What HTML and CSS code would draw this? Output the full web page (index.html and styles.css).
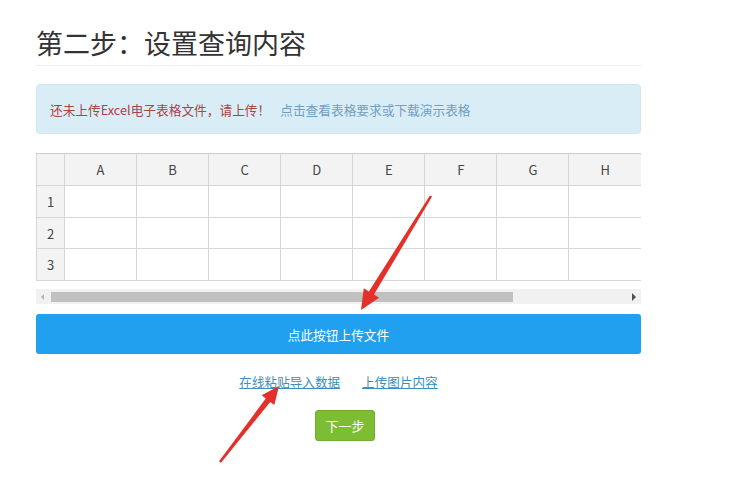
FILE: index.html
```html
<!DOCTYPE html>
<html lang="zh">
<head>
<meta charset="utf-8">
<title>第二步：设置查询内容</title>
<link rel="stylesheet" href="styles.css">
</head>
<body>
<div class="page">
  <h1 class="title">第二步：设置查询内容</h1>
  <div class="alert">
    <span class="alert-warn">还未上传Excel电子表格文件，请上传！</span>
    <a class="alert-link" href="#">点击查看表格要求或下载演示表格</a>
  </div>
  <table class="sheet">
    <thead>
      <tr><th class="corner"></th><th>A</th><th>B</th><th>C</th><th>D</th><th>E</th><th>F</th><th>G</th><th>H</th></tr>
    </thead>
    <tbody>
      <tr><th class="rh">1</th><td></td><td></td><td></td><td></td><td></td><td></td><td></td><td></td></tr>
      <tr><th class="rh">2</th><td></td><td></td><td></td><td></td><td></td><td></td><td></td><td></td></tr>
      <tr><th class="rh">3</th><td></td><td></td><td></td><td></td><td></td><td></td><td></td><td></td></tr>
    </tbody>
  </table>
  <div class="scrollbar">
    <span class="arrow-left"></span>
    <div class="thumb"></div>
    <span class="arrow-right"></span>
  </div>
  <button class="upload-btn">点此按钮上传文件</button>
  <div class="links">
    <a href="#">在线粘贴导入数据</a>
    <a href="#">上传图片内容</a>
  </div>
  <div class="next-row">
    <button class="next-btn">下一步</button>
  </div>
</div>
<svg class="arrows" width="755" height="500" viewBox="0 0 755 500">
  <polygon fill="#e3302a" points="432.1,196.6 374.0,294.6 379.1,297.7 361,310 363.8,288.3 368.9,291.4 429.9,195.4"/>
  <polygon fill="#e3302a" points="221.0,462.7 270.2,401.9 274.3,405.1 279,386 261.7,395.3 265.8,398.5 219.0,461.3"/>
</svg>
</body>
</html>
```
FILE: styles.css
```css
html, body {
  margin: 0;
  padding: 0;
  background: #fff;
}
body {
  position: relative;
  min-height: 500px;
  font-family: "Noto Sans CJK SC", "Noto Sans", sans-serif;
  color: #333;
}
.page {
  width: 605px;
  margin-left: 36px;
  padding-top: 23px;
}
.title {
  margin: 0;
  font-size: 27px;
  font-weight: 400;
  line-height: 40px;
  padding-bottom: 2px;
  border-bottom: 1px solid #eee;
  color: #333;
}
.alert {
  margin-top: 18px;
  height: 48px;
  display: flex;
  align-items: center;
  gap: 10px;
  padding: 0 13px;
  background: #d9edf7;
  border: 1px solid #cfe6f2;
  border-radius: 4px;
  font-size: 12.7px;
}
.alert-warn {
  color: #a94442;
}
.alert-link {
  color: #6f9fc2;
  text-decoration: none;
}
.sheet {
  margin-top: 19px;
  width: 605px;
  border-collapse: collapse;
  table-layout: fixed;
  font-size: 13px;
}
.sheet th, .sheet td {
  border: 1px solid #d6d6d6;
  padding: 0;
  font-weight: 400;
  text-align: center;
  color: #444;
}
.sheet thead th {
  height: 31px;
  background: #f3f3f3;
  border-top-color: #ccc;
}
.sheet thead th.corner {
  width: 27px;
}
.sheet tbody th.rh {
  background: #f3f3f3;
}
.sheet tbody td, .sheet tbody th {
  height: 30.7px;
}
.sheet th:last-child, .sheet td:last-child {
  border-right: none;
}
.scrollbar {
  margin-top: 8px;
  height: 15px;
  background: #f1f1f1;
  display: flex;
  align-items: center;
}
.arrow-left {
  width: 0;
  height: 0;
  margin-left: 5px;
  border-top: 3px solid transparent;
  border-bottom: 3px solid transparent;
  border-right: 3px solid #b5b5b5;
}
.thumb {
  margin-left: 7px;
  width: 462px;
  height: 10px;
  background: #c1c1c1;
}
.arrow-right {
  width: 0;
  height: 0;
  margin-left: auto;
  margin-right: 5px;
  border-top: 4px solid transparent;
  border-bottom: 4px solid transparent;
  border-left: 4px solid #505050;
}
.upload-btn {
  display: block;
  margin-top: 10px;
  width: 605px;
  height: 40px;
  border: none;
  border-radius: 3px;
  background: #22a0f0;
  color: #fff;
  font-family: inherit;
  font-size: 12.7px;
  padding: 0;
}
.links {
  margin-top: 18px;
  display: flex;
  justify-content: center;
  gap: 22px;
  font-size: 12.6px;
  line-height: 20px;
}
.links a {
  color: #3a8fbd;
  text-decoration: underline;
}
.next-row {
  margin-top: 18px;
  display: flex;
  justify-content: center;
}
.next-btn {
  margin-left: 13px;
  width: 60px;
  height: 31px;
  border: 1px solid #6fae2b;
  border-radius: 3px;
  background: #7cbd33;
  color: #fff;
  font-family: inherit;
  font-size: 13px;
  padding: 0;
}
.arrows {
  position: absolute;
  left: 0;
  top: 0;
  pointer-events: none;
}
```
